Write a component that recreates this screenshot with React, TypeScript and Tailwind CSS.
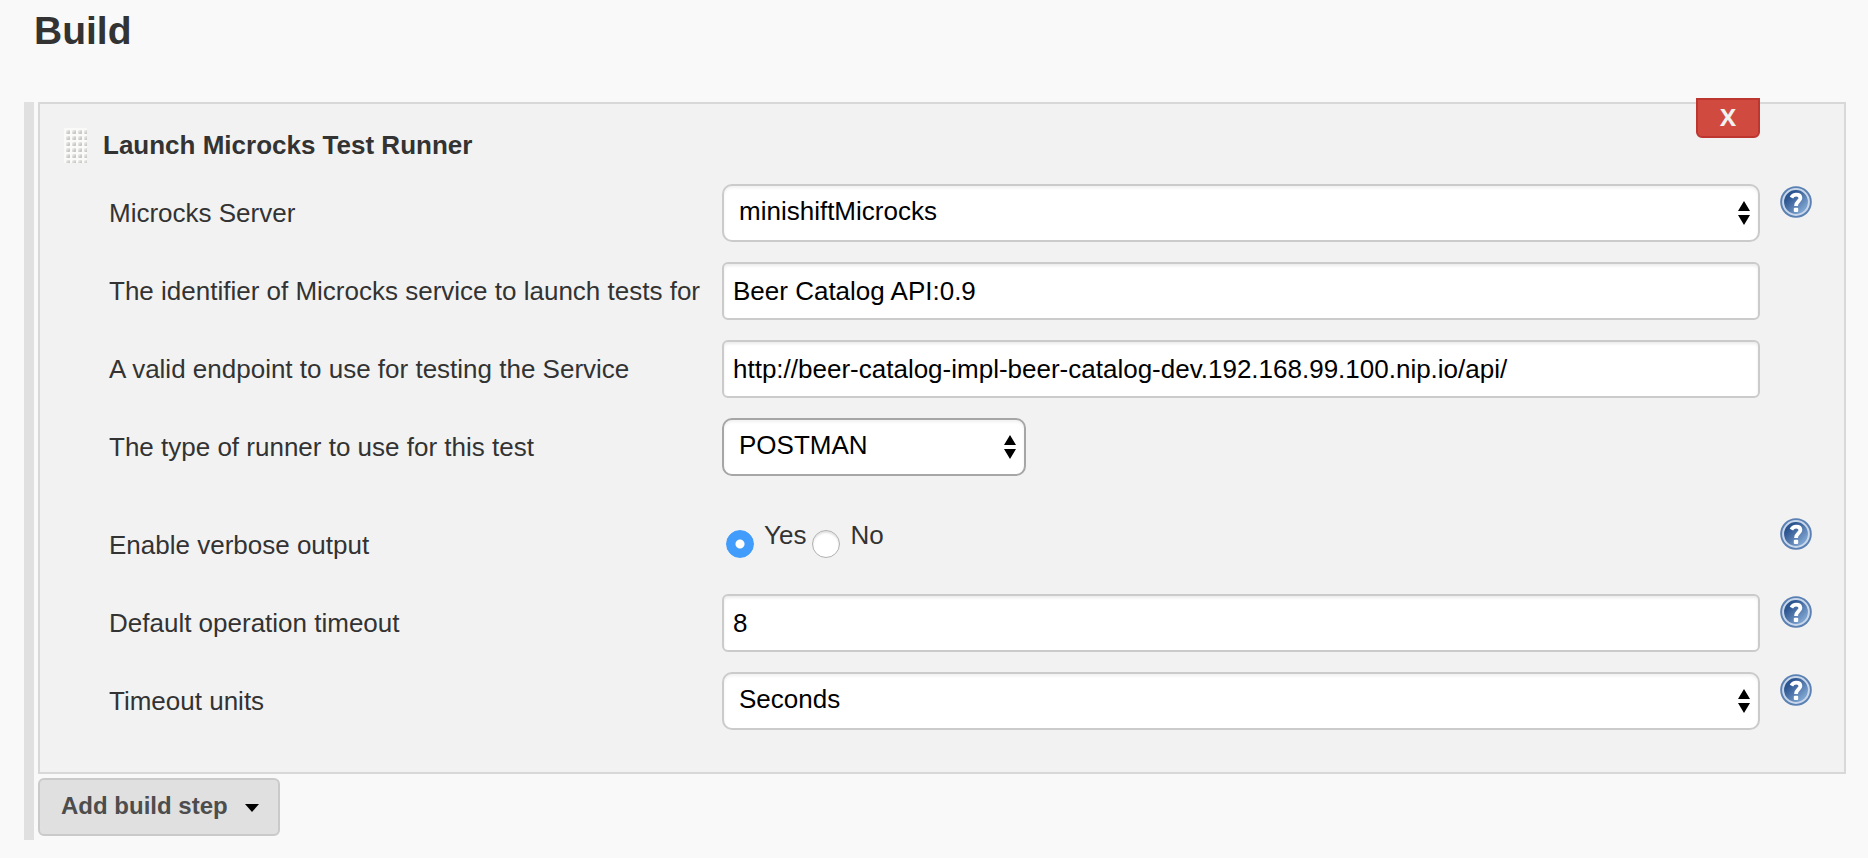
import { useId, type ReactNode } from "react";

function HelpIcon() {
  const id = useId();
  return (
    <svg viewBox="0 0 32 32" className="block size-8" aria-hidden="true">
      <defs>
        <linearGradient id={id} x1="0.1" y1="0.1" x2="0.9" y2="0.9">
          <stop offset="0.2" stopColor="#2c548f" />
          <stop offset="1" stopColor="#8db2dc" />
        </linearGradient>
      </defs>
      <circle cx="16" cy="16" r="15.8" fill="#5b80b3" />
      <circle cx="16" cy="16" r="12.9" fill={`url(#${id})`} stroke="#c9d7ea" strokeWidth="2" />
      <path
        d="M11.4 11.6C12.4 9.6 14 8.6 16.2 8.6C19 8.6 20.4 10 20.4 12C20.4 15 16 15.4 16 20"
        fill="none"
        stroke="#fff"
        strokeWidth="3.8"
      />
      <rect x="13.8" y="21.8" width="4.4" height="4.2" rx="1" fill="#fff" />
    </svg>
  );
}

function HelpButton({ topic }: { topic: string }) {
  return (
    <button type="button" aria-label={`Help for ${topic}`} className="mt-0.5 size-8">
      <HelpIcon />
    </button>
  );
}

function Grip() {
  const id = useId();
  return (
    <svg width="23" height="36" className="shrink-0" aria-hidden="true">
      <defs>
        <linearGradient id={`${id}g`} x1="0" y1="0" x2="1" y2="1">
          <stop offset="0.1" stopColor="#f0f0ee" />
          <stop offset="0.9" stopColor="#bcbcba" />
        </linearGradient>
        <pattern id={id} width="6" height="6" patternUnits="userSpaceOnUse">
          <rect width="6" height="6" fill="#fafaf9" />
          <rect x="2" y="2" width="4" height="4" rx="1" fill={`url(#${id}g)`} />
        </pattern>
      </defs>
      <rect width="23" height="35" fill={`url(#${id})`} />
    </svg>
  );
}

const fieldClass =
  "block h-[58px] w-full border-2 bg-white text-[26px] text-black outline-none";

function TextField({ id, value }: { id: string; value: string }) {
  return (
    <input
      id={id}
      type="text"
      defaultValue={value}
      className={`${fieldClass} rounded-md border-[#cbcbcb] px-[9px] shadow-[inset_0_2px_3px_rgba(0,0,0,0.08)]`}
    />
  );
}

function SelectField({
  id,
  options,
  className,
}: {
  id: string;
  options: string[];
  className: string;
}) {
  return (
    <div className={`relative rounded-[10px] ${className}`}>
      <select
        id={id}
        className={`${fieldClass} appearance-none rounded-[10px] border-inherit pr-10 pb-1 pl-[15px] shadow-[inset_0_2px_3px_rgba(0,0,0,0.06)]`}
      >
        {options.map((o) => (
          <option key={o}>{o}</option>
        ))}
      </select>
      <svg
        viewBox="0 0 12 24"
        className="pointer-events-none absolute top-[17px] right-2.5 h-6 w-3"
        aria-hidden="true"
      >
        <path d="M6 0L12 10H0ZM0 14H12L6 24Z" fill="#000" />
      </svg>
    </div>
  );
}

function Row({
  label,
  htmlFor,
  help,
  children,
}: {
  label: string;
  htmlFor: string;
  help?: boolean;
  children: ReactNode;
}) {
  return (
    <div className="grid grid-cols-[613px_minmax(0,1fr)_52px]">
      <label htmlFor={htmlFor} className="self-center leading-[58px]">
        {label}
      </label>
      {children}
      <div className="flex justify-end">{help && <HelpButton topic={label} />}</div>
    </div>
  );
}

function Radio({ id, label, checked }: { id: string; label: string; checked?: boolean }) {
  return (
    <div className="flex items-start">
      <input
        id={id}
        type="radio"
        name="verbose"
        defaultChecked={checked}
        className="mt-3.5 size-7 appearance-none rounded-full border border-[#b0b0b0] bg-white shadow-[inset_0_2px_2px_rgba(0,0,0,0.12)] checked:border-[#429cfb] checked:bg-[radial-gradient(circle,#fff_0_4px,#429cfb_5px)] checked:shadow-none"
      />
      <label htmlFor={id} className="mt-1 pl-2.5 leading-[30px]">
        {label}
      </label>
    </div>
  );
}

export default function App() {
  return (
    <main className="min-h-screen bg-[#f9f9f9] pt-[7px] pr-[22px] pb-4 pl-6 font-['Liberation_Sans',Arial,sans-serif] text-[26px] text-[#333]">
      <h1 className="mb-[47px] pl-[10px] text-[39px] leading-[48px] font-bold">Build</h1>
      <section className="border-l-[10px] border-[#e0e0e0] pb-1 pl-1">
        <div className="relative border-2 border-[#d8d8d8] bg-[#f2f2f2] pr-8 pb-[42px] pl-6">
          <button
            type="button"
            aria-label="Delete build step"
            className="absolute -top-1.5 right-[84px] h-10 w-16 rounded-b-md border-2 border-[#bd362f] bg-[#d14a40] pb-0.5 font-['Open_Sans',sans-serif] text-[24px] leading-[34px] font-bold text-[#f2f2f2]"
          >
            X
          </button>
          <div className="flex h-20 items-start gap-4 pt-6">
            <Grip />
            <h2 className="leading-[34px] font-bold">Launch Microcks Test Runner</h2>
          </div>
          <form className="flex flex-col gap-5 pl-[45px]">
            <Row label="Microcks Server" htmlFor="server" help>
              <SelectField
                id="server"
                options={["minishiftMicrocks"]}
                className="border-[#cbcbcb]"
              />
            </Row>
            <Row label="The identifier of Microcks service to launch tests for" htmlFor="service">
              <TextField id="service" value="Beer Catalog API:0.9" />
            </Row>
            <Row label="A valid endpoint to use for testing the Service" htmlFor="endpoint">
              <TextField
                id="endpoint"
                value="http://beer-catalog-impl-beer-catalog-dev.192.168.99.100.nip.io/api/"
              />
            </Row>
            <Row label="The type of runner to use for this test" htmlFor="runner">
              <SelectField
                id="runner"
                options={["POSTMAN", "HTTP", "SOAP_HTTP", "SOAP_UI"]}
                className="w-[304px] border-[#a6a6a6]"
              />
            </Row>
            <div className="mt-5">
              <Row label="Enable verbose output" htmlFor="verbose-yes" help>
                <div className="flex gap-1.5 pl-1">
                  <Radio id="verbose-yes" label="Yes" checked />
                  <Radio id="verbose-no" label="No" />
                </div>
              </Row>
            </div>
            <Row label="Default operation timeout" htmlFor="timeout" help>
              <TextField id="timeout" value="8" />
            </Row>
            <Row label="Timeout units" htmlFor="units" help>
              <SelectField
                id="units"
                options={["Seconds", "Milliseconds", "Minutes"]}
                className="border-[#cbcbcb]"
              />
            </Row>
          </form>
        </div>
        <button
          type="button"
          className="mt-1 flex h-[58px] items-center gap-[17px] rounded-md border-2 border-[#cacaca] bg-[#e0e0e0] pr-[19px] pb-0.5 pl-[21px] text-[24px] font-bold text-[#4d4d4d]"
        >
          Add build step
          <svg viewBox="0 0 14 8" className="mt-1 h-2 w-3.5" aria-hidden="true">
            <path d="M0 0H14L7 8Z" fill="#000" />
          </svg>
        </button>
      </section>
    </main>
  );
}
